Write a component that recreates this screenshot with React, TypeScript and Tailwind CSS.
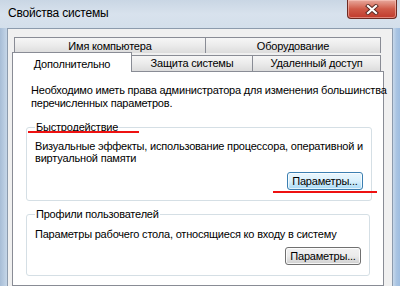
import React from 'react';

const font = "font-['Segoe_UI','Liberation_Sans',Arial,sans-serif]";
const txt = 'text-[11px] tracking-[-0.2px]';

function Tab({ label, className }: { label: string; className: string }) {
  return (
    <div
      className={`flex items-center justify-center border border-b-0 border-[#898c95] bg-linear-to-b from-[#f6f6f6] via-[#ebebeb] to-[#dcdcdc] ${txt} text-black ${className}`}
    >
      {label}
    </div>
  );
}

function WinButton({ hot }: { hot?: boolean }) {
  return (
    <div
      className={`w-[76px] h-[18px] rounded-[3px] border flex items-center justify-center ${txt} leading-none text-black ${
        hot
          ? 'border-[#3c7fb1] bg-linear-to-b from-[#eaf6fd] via-[#d9f0fc] to-[#a7d9f5] shadow-[inset_0_0_0_1px_rgba(255,255,255,0.7)]'
          : 'border-[#707070] bg-linear-to-b from-[#f2f2f2] via-[#ebebeb] to-[#cfcfcf] shadow-[inset_0_0_0_1px_rgba(255,255,255,0.8)]'
      }`}
    >
      Параметры...
    </div>
  );
}

function GroupBox({ title, children }: { title: string; children: React.ReactNode }) {
  return (
    <fieldset className="border border-[#d5dfe5] rounded-[3px] px-[8px]">
      <legend className={`px-[1px] ${txt} leading-[13px] text-black`}>{title}</legend>
      {children}
    </fieldset>
  );
}

export default function App() {
  return (
    <div
      className={`relative w-[400px] h-[286px] overflow-hidden flex flex-col bg-linear-to-r from-[#b3c8de] via-[#d3dfec] to-[#b9cde3] ${font}`}
    >
      {/* Title bar */}
      <div className="relative h-[28px] shrink-0 bg-linear-to-b from-[#c9d6e4] via-[#d8e2ed] to-[#d3dfeb]">
        <div className="pl-[8px] pt-[6px] text-[12px] tracking-[-0.2px] leading-[15px] text-black">Свойства системы</div>
        <div className="absolute right-[3px] top-0 w-[50px] h-[19px] rounded-b-[4px] border border-t-0 border-[#6d2a22] bg-linear-to-b from-[#e7a89d] via-[#cf5a48] to-[#c0392b] flex items-center justify-center shadow-[inset_0_0_0_1px_rgba(255,210,200,0.5)]">
          <svg width="14" height="11" viewBox="0 0 14 11">
            <path d="M3 2 L11 9 M11 2 L3 9" stroke="#5a2a24" strokeWidth="4" strokeLinecap="square" />
            <path d="M3 2 L11 9 M11 2 L3 9" stroke="#ffffff" strokeWidth="2.2" strokeLinecap="square" />
          </svg>
        </div>
      </div>

      {/* Body */}
      <div className="flex flex-1 min-h-0">
        <div className="w-[7px] shrink-0 bg-linear-to-r from-[#a7bdd6] to-[#c5d6e8]" />
        <div className="flex-1 flex flex-col bg-[#f0f0f0] border-x border-t border-[#8c9bad] pl-[4px] pt-[8px] pr-[6px]">
          {/* Tabs row 1 */}
          <div className="ml-[2px] w-[367px] h-[16px] flex shrink-0">
            <Tab label="Имя компьютера" className="w-[192px] pt-[1px]" />
            <Tab label="Оборудование" className="flex-1 border-l-0 pt-[1px]" />
          </div>
          {/* Tabs row 2 */}
          <div className="relative z-10 -mt-[1px] w-[369px] h-[19px] flex items-end shrink-0">
            <div className={`w-[120px] h-[20px] -mb-[1px] bg-white border border-b-0 border-[#898c95] flex items-start justify-center pt-[3px] ${txt} text-black`}>
              Дополнительно
            </div>
            <Tab label="Защита системы" className="w-[121px] h-[16px] border-l-0" />
            <Tab label="Удаленный доступ" className="flex-1 h-[16px] border-l-0" />
          </div>

          {/* Panel */}
          <div className="w-[372px] flex-1 bg-white border border-[#898c95] px-[13px] pt-[12px] flex flex-col">
            <p className={`pl-[5px] whitespace-nowrap ${txt} leading-[13px] text-black`}>
              Необходимо иметь права администратора для изменения большинства
              <br />
              перечисленных параметров.
            </p>

            <div className="mt-[11px]">
              <GroupBox title="Быстродействие">
                <p className={`mt-[6px] whitespace-nowrap ${txt} leading-[12px] text-black`}>
                  Визуальные эффекты, использование процессора, оперативной и
                  <br />
                  виртуальной памяти
                </p>
                <div className="mt-[8px] mb-[10px] flex justify-end">
                  <WinButton hot />
                </div>
              </GroupBox>
            </div>

            <div className="mt-[7px]">
              <GroupBox title="Профили пользователей">
                <p className={`mt-[7px] ${txt} leading-[12px] text-black`}>
                  Параметры рабочего стола, относящиеся ко входу в систему
                </p>
                <div className="mt-[7px] mb-[10px] flex justify-end">
                  <WinButton />
                </div>
              </GroupBox>
            </div>
          </div>
        </div>
        <div className="w-[7px] shrink-0 bg-linear-to-r from-[#c7d8ea] via-[#a9c4e2] to-[#9ebde0]" />
      </div>

      {/* Red annotation underlines */}
      <div className="absolute left-[28px] top-[131px] w-[111px] h-[2px] bg-[#ee1111]" />
      <div className="absolute left-[273px] top-[191px] w-[104px] h-[2px] bg-[#ee1111]" />
    </div>
  );
}
